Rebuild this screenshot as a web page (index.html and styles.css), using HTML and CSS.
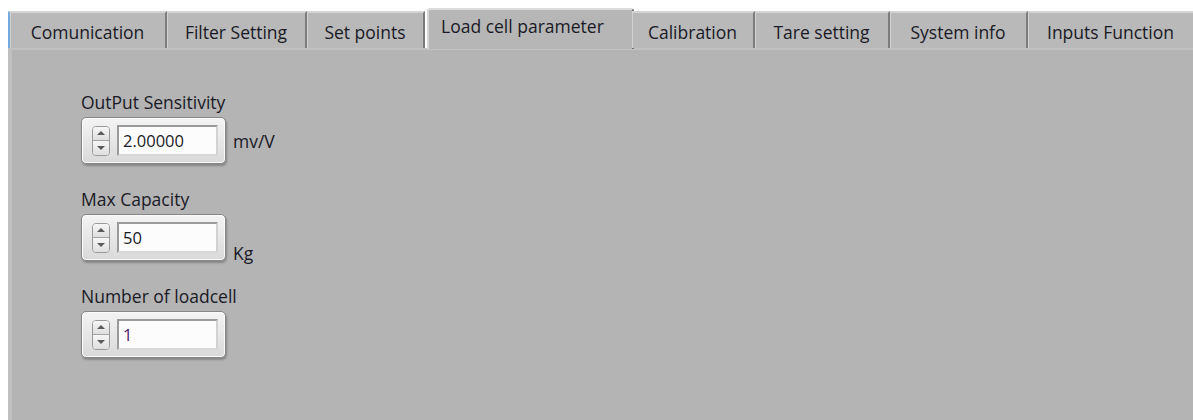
FILE: index.html
```html
<!DOCTYPE html>
<html>
<head>
<meta charset="utf-8">
<link rel="stylesheet" href="styles.css">
</head>
<body>
<div class="window">
  <div class="tabs">
    <div class="tab first w1">Comunication</div>
    <div class="tab w2">Filter Setting</div>
    <div class="tab w3">Set points</div>
    <div class="tab active w4">Load cell parameter</div>
    <div class="tab w5">Calibration</div>
    <div class="tab w6">Tare setting</div>
    <div class="tab w7">System info</div>
    <div class="tab last w8">Inputs Function</div>
  </div>
  <div class="panel">
    <div class="field">
      <div class="label">OutPut Sensitivity</div>
      <div class="row">
        <div class="numeric">
          <div class="spin"><span class="up"></span><span class="down"></span></div>
          <div class="value">2.00000</div>
        </div>
        <span class="unit mid">mv/V</span>
      </div>
    </div>
    <div class="field">
      <div class="label">Max Capacity</div>
      <div class="row">
        <div class="numeric">
          <div class="spin"><span class="up"></span><span class="down"></span></div>
          <div class="value">50</div>
        </div>
        <span class="unit low">Kg</span>
      </div>
    </div>
    <div class="field">
      <div class="label">Number of loadcell</div>
      <div class="row">
        <div class="numeric">
          <div class="spin"><span class="up"></span><span class="down"></span></div>
          <div class="value purple">1</div>
        </div>
      </div>
    </div>
  </div>
</div>
</body>
</html>
```
FILE: styles.css
```css
html, body {
  margin: 0;
  padding: 0;
  background: #ffffff;
}

body {
  font-family: "Open Sans", "Noto Sans", sans-serif;
  font-size: 17.5px;
  color: #1a1a26;
  height: 420px;
  overflow: hidden;
}

.window {
  padding: 11px 0 0 8px;
  height: 409px;
  display: flex;
  flex-direction: column;
}

/* tab strip */
.tabs {
  display: flex;
  height: 37px;
  position: relative;
  z-index: 1;
}

.tab {
  box-sizing: border-box;
  height: 37px;
  background: #b9b9b9;
  border-top: 2px solid #d4d4d4;
  border-right: 2px solid #7c7c7c;
  box-shadow: inset 1px 0 0 #d2d2d2;
  display: flex;
  align-items: center;
  justify-content: center;
  padding-top: 2px;
  white-space: nowrap;
  flex: none;
}

.tab.first {
  border-left: 2px solid #74a9de;
}

.tab.last {
  border-right: none;
}

.tab.active {
  height: 41px;
  margin-top: -3px;
  margin-left: 2px;
  margin-right: -2px;
  background: #b6b6b6;
  border-top: 2px solid #dcdcdc;
  border-right: 2px solid #6e6e6e;
  box-shadow: inset 2px 0 0 #d6d6d6;
  border-radius: 3px 3px 0 0;
  padding-top: 0;
  padding-bottom: 8px;
  justify-content: flex-start;
  padding-left: 14px;
}

.w1 { width: 159px; }
.w2 { width: 140px; }
.w3 { width: 118px; }
.w4 { width: 207px; }
.w5 { width: 123px; }
.w6 { width: 135px; }
.w7 { width: 138px; }
.w8 { flex: 1; }

/* page body */
.panel {
  flex: 1;
  background: #b4b4b4;
  border-top: 2px solid #c2c2c2;
  border-left: 4px solid #c0c0c0;
  padding: 41px 0 0 69px;
  display: flex;
  flex-direction: column;
  gap: 24px;
}

.field {
  display: flex;
  flex-direction: column;
  gap: 4px;
}

.label {
  line-height: 22px;
  height: 22px;
}

.row {
  display: flex;
  align-items: center;
  gap: 7px;
}

/* numeric control */
.numeric {
  box-sizing: border-box;
  width: 145px;
  height: 47px;
  border: 1px solid #878787;
  border-radius: 5px;
  background: linear-gradient(#f4f4f4, #e4e4e4 60%, #d9d9d9);
  box-shadow: 1px 2px 2px rgba(0, 0, 0, 0.25), inset 0 0 0 1px #fbfbfb;
  display: flex;
  align-items: center;
  padding: 0 7px 0 10px;
  gap: 7px;
}

.spin {
  box-sizing: border-box;
  width: 18px;
  height: 30px;
  border: 1px solid #9a9a9a;
  border-radius: 4px;
  background: #ececec;
  display: flex;
  flex-direction: column;
  overflow: hidden;
}

.spin span {
  flex: 1;
  position: relative;
  background: linear-gradient(#f6f6f6, #dedede);
}

.spin .up {
  border-bottom: 1px solid #a4a4a4;
}

.spin span::after {
  content: "";
  position: absolute;
  left: 50%;
  top: 50%;
  margin-left: -4px;
  border-left: 4px solid transparent;
  border-right: 4px solid transparent;
}

.spin .up::after {
  border-bottom: 4px solid #5a5a5a;
  margin-top: -2px;
}

.spin .down::after {
  border-top: 4px solid #5a5a5a;
  margin-top: -2px;
}

.value {
  box-sizing: border-box;
  flex: 1;
  height: 31px;
  background: #fcfcfc;
  border: 2px solid #9a9a9a;
  border-right-color: #d2d2d2;
  border-bottom-color: #d8d8d8;
  padding-left: 4px;
  display: flex;
  align-items: center;
  font-size: 16.5px;
}

.value.purple {
  color: #4a1a6a;
}

.unit.low {
  align-self: flex-end;
  margin-bottom: -4px;
}
```
